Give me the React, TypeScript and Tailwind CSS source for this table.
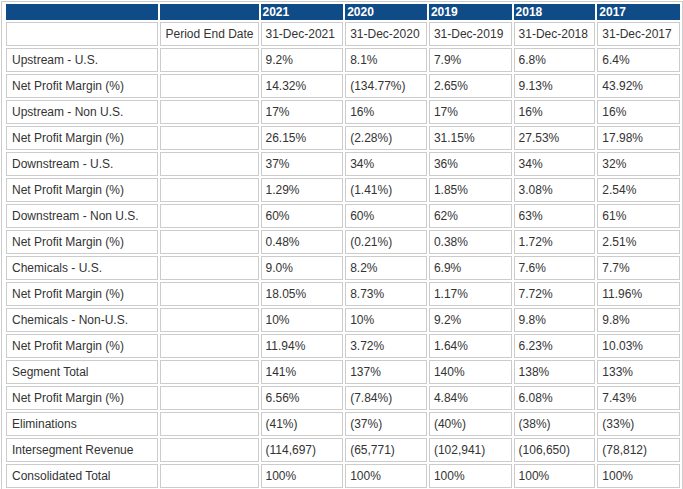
const years = ['2021', '2020', '2019', '2018', '2017']

const rows: [string, string[]][] = [
  ['Upstream - U.S.', ['9.2%', '8.1%', '7.9%', '6.8%', '6.4%']],
  ['Net Profit Margin (%)', ['14.32%', '(134.77%)', '2.65%', '9.13%', '43.92%']],
  ['Upstream - Non U.S.', ['17%', '16%', '17%', '16%', '16%']],
  ['Net Profit Margin (%)', ['26.15%', '(2.28%)', '31.15%', '27.53%', '17.98%']],
  ['Downstream - U.S.', ['37%', '34%', '36%', '34%', '32%']],
  ['Net Profit Margin (%)', ['1.29%', '(1.41%)', '1.85%', '3.08%', '2.54%']],
  ['Downstream - Non U.S.', ['60%', '60%', '62%', '63%', '61%']],
  ['Net Profit Margin (%)', ['0.48%', '(0.21%)', '0.38%', '1.72%', '2.51%']],
  ['Chemicals - U.S.', ['9.0%', '8.2%', '6.9%', '7.6%', '7.7%']],
  ['Net Profit Margin (%)', ['18.05%', '8.73%', '1.17%', '7.72%', '11.96%']],
  ['Chemicals - Non-U.S.', ['10%', '10%', '9.2%', '9.8%', '9.8%']],
  ['Net Profit Margin (%)', ['11.94%', '3.72%', '1.64%', '6.23%', '10.03%']],
  ['Segment Total', ['141%', '137%', '140%', '138%', '133%']],
  ['Net Profit Margin (%)', ['6.56%', '(7.84%)', '4.84%', '6.08%', '7.43%']],
  ['Eliminations', ['(41%)', '(37%)', '(40%)', '(38%)', '(33%)']],
  ['Intersegment Revenue', ['(114,697)', '(65,771)', '(102,941)', '(106,650)', '(78,812)']],
  ['Consolidated Total', ['100%', '100%', '100%', '100%', '100%']],
]

// widths tuned to the reference column edges
const yearWidths = ['w-[83px]', 'w-[82px]', 'w-[83px]', 'w-[82px]', 'w-[83px]']

export default function App() {
  const cell = 'border border-[#cccccc] h-[24px] pl-1 pr-1 align-middle whitespace-nowrap'

  return (
    <div className="bg-white w-[683px] h-[489px] pt-px pl-px">
      <div className="inline-block border border-[#cccccc] pl-[2px] font-['Liberation_Sans',Arial,sans-serif] text-[12px] leading-[14px] text-[#333333]">
        <table className="border-separate border-spacing-[2px] table-fixed">
          <thead>
            <tr>
              <th className="w-[154px] h-[16px] bg-[#0f4c87] p-0" />
              <th className="w-[97px] h-[16px] bg-[#0f4c87] p-0" />
              {years.map((y, i) => (
                <th
                  key={y}
                  className={`${yearWidths[i]} h-[16px] bg-[#0f4c87] text-white font-bold text-left pl-[2px] py-0 align-middle`}
                >
                  {y}
                </th>
              ))}
            </tr>
          </thead>
          <tbody>
            <tr>
              <td className={cell} />
              <td className={cell}>Period End Date</td>
              {years.map((y) => (
                <td key={y} className={cell}>31-Dec-{y}</td>
              ))}
            </tr>
            {rows.map(([label, vals], r) => (
              <tr key={r}>
                <td className={`${cell} pl-[5px]`}>{label}</td>
                <td className={cell} />
                {vals.map((v, i) => (
                  <td key={i} className={cell}>{v}</td>
                ))}
              </tr>
            ))}
          </tbody>
        </table>
      </div>
    </div>
  )
}
